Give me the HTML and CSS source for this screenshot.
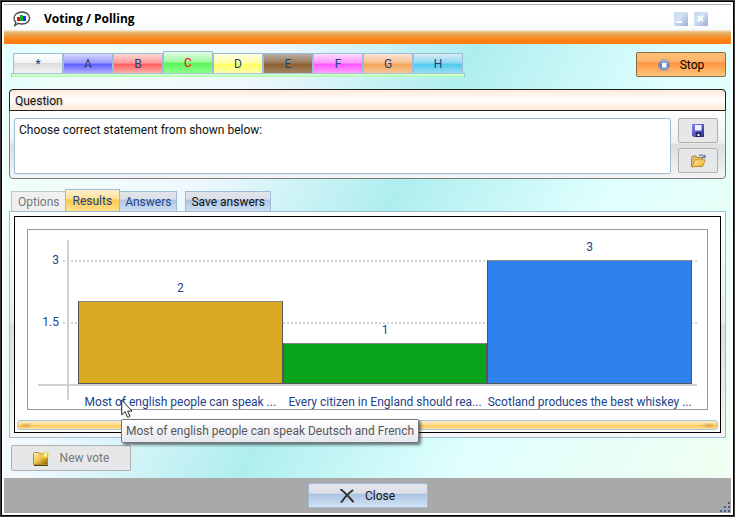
FILE: index.html
```html
<!DOCTYPE html>
<html lang="en">
<head>
<meta charset="utf-8">
<title>Voting / Polling</title>
<link rel="stylesheet" href="styles.css">
</head>
<body>
<div class="window">
  <header class="titlebar">
    <svg class="app-icon" width="18" height="16" viewBox="0 0 18 16">
      <path d="M3 11.500C1.500 10 1 8.500 1 7 1 3.500 4.500 1 9 1s7.500 2.700 7.500 6-3 6-7.500 6c-1.400 0-2.600-.3-3.600-.7L1.500 14.800z" fill="#fff" stroke="#444" stroke-width="1.300" stroke-linejoin="round"/>
      <path d="M4 6h3v4H4z" fill="#f01010"/><path d="M7 4h3v6H7z" fill="#10b030"/><path d="M10 5h3v5h-3z" fill="#1c30ee"/>
    </svg>
    <h1>Voting / Polling</h1>
    <button class="win-btn" aria-label="Minimize"><svg width="14" height="14" viewBox="0 0 14 14"><path d="M3 10h5" stroke="#fff" stroke-width="2"/></svg></button>
    <button class="win-btn" aria-label="Close window"><svg width="14" height="14" viewBox="0 0 14 14"><path d="M4 4l5 5M9 4l-5 5" stroke="#fff" stroke-width="2"/></svg></button>
  </header>
  <div class="stripe"></div>

  <main class="content">
    <div class="toolbar">
      <nav class="letters">
        <div class="letter-row">
          <button class="letter star">*</button>
          <button class="letter a">A</button>
          <button class="letter b">B</button>
          <button class="letter c selected">C</button>
          <button class="letter d">D</button>
          <button class="letter e">E</button>
          <button class="letter f">F</button>
          <button class="letter g">G</button>
          <button class="letter h">H</button>
        </div>
        <div class="letter-base"></div>
      </nav>
      <button class="stop">
        <svg width="12" height="12" viewBox="0 0 12 12">
          <defs><linearGradient id="orb" x2="0" y2="1"><stop stop-color="#b9c3df"/><stop offset=".5" stop-color="#6478ae"/><stop offset="1" stop-color="#90a5cd"/></linearGradient></defs>
          <circle cx="6" cy="6" r="5.500" fill="url(#orb)" stroke="#8190b8" stroke-width=".6"/><path d="M4 4h4.500v4.500H4z" fill="#fff"/>
        </svg>
        Stop
      </button>
    </div>

    <section class="question">
      <h2><label for="q">Question</label></h2>
      <div class="question-body">
        <textarea id="q">Choose correct statement from shown below:</textarea>
        <div class="side">
          <button class="plain" aria-label="Save">
            <svg width="12" height="13" viewBox="0 0 12 13">
              <defs><linearGradient id="disk" x2="1" y2="1"><stop stop-color="#8580f0"/><stop offset="1" stop-color="#2a2a98"/></linearGradient></defs>
              <path d="M0 0h12v13H1.500L0 11.500z" fill="url(#disk)"/><path d="M3 1h6.500v5.500H3z" fill="#eef4ff"/><path d="M4 8.500h5V13H4z" fill="#23234e"/><path d="M5.500 10h2v2h-2z" fill="#fff"/>
            </svg>
          </button>
          <button class="plain" aria-label="Open">
            <svg width="15" height="14" viewBox="0 0 15 14">
              <defs><linearGradient id="gold" x2="1" y2="1"><stop stop-color="#fff0a8"/><stop offset="1" stop-color="#f0a818"/></linearGradient></defs>
              <path d="M.5 12.500V3.500L1.500 2H5l1 1.500h5.500v2L11 12.500z" fill="#e2bc62" stroke="#a88a48"/><path d="M1 13L4 5.800h10.300L12 12z" fill="url(#gold)" stroke="#b88a30" stroke-width=".8"/>
              <path d="M8 2c1.500-1.500 3.500-1.500 4.500.2" fill="none" stroke="#6883a8" stroke-width="1.200"/><path d="M14.500 0v4h-4z" fill="#54749d"/>
            </svg>
          </button>
        </div>
      </div>
    </section>

    <div class="views">
      <button class="view" disabled>Options</button>
      <button class="view selected">Results</button>
      <button class="view blue">Answers</button>
      <button class="view blue save">Save answers</button>
    </div>
    <section class="panel">
      <div class="results">
        <div class="chart">
          <div class="plot">
            <div class="tick high"><span>3</span></div>
            <div class="tick mid"><span>1.5</span></div>
            <div class="axis"></div>
            <div class="bars">
              <div class="col"><span>2</span><div class="bar gold" style="height:57.400%"></div></div>
              <div class="col"><span>1</span><div class="bar green" style="height:28.700%"></div></div>
              <div class="col"><span>3</span><div class="bar azure" style="height:86.100%"></div></div>
            </div>
          </div>
          <div class="names">
            <div class="name">Most of english people can speak ...
              <svg class="cursor" width="12" height="20" viewBox="0 0 12 20"><path d="M.7 1v14.800l3.400-3.200 2.300 5.500q1.300.7 2.600-.8l-2.400-5.200h4.500z" fill="#fff" stroke="#222433"/></svg>
              <div class="tooltip" role="tooltip">Most of english people can speak Deutsch and French</div>
            </div>
            <div class="name">Every citizen in England should rea...</div>
            <div class="name">Scotland produces the best whiskey ...</div>
          </div>
        </div>
        <div class="scroll"></div>
      </div>
    </section>
    <button class="plain new-vote" disabled>
      <svg width="17" height="15" viewBox="0 0 17 15">
        <defs><linearGradient id="folder" x2="1" y2="1"><stop stop-color="#fff3bd"/><stop offset=".5" stop-color="#efc24a"/><stop offset="1" stop-color="#8c5e08"/></linearGradient></defs>
        <path d="M.5 13.500v-11L1.500 1.500h4L7 3h7.500v10.500z" fill="url(#folder)" stroke="#b68a2c"/><path d="M1 14.500h14" stroke="#55401a"/>
        <path d="M12.500 0v8M8.500 4h8M9.700 1.200l5.600 5.600M15.300 1.200L9.700 6.800" stroke="#ffd52c" stroke-width="1.200"/><circle cx="12.500" cy="4" r="1.500" fill="#fffbd0"/>
      </svg>
      New vote
    </button>
  </main>

  <footer class="footer">
    <button class="close">
      <svg width="14" height="14" viewBox="0 0 14 14"><path d="M1 .5C5 3.500 9 8 13 12.500M12.500 1.500C8 4.500 5 8 1.500 13" fill="none" stroke="#333" stroke-width="2" stroke-linecap="round"/></svg>
      Close
    </button>
    <svg class="grip" width="12" height="12" viewBox="0 0 12 12"><path d="M9 1h2v2H9zM5 5h2v2H5zM9 5h2v2H9zM1 9h2v2H1zM5 9h2v2H5zM9 9h2v2H9z" fill="#405f8e"/></svg>
  </footer>
</div>
</body>
</html>
```
FILE: styles.css
```css
* { box-sizing: border-box; }
body {
  margin: 0;
  font: 12px/16px Roboto, "Noto Sans", sans-serif;
  color: #111;
}
button, textarea { font: inherit; color: inherit; }
button { padding: 0; margin: 0; }
svg { display: block; flex: none; }
.window {
  min-height: 100vh;
  display: flex;
  flex-direction: column;
  border: 1px solid #3a3a3a;
  outline: 1px solid #000;
  outline-offset: -2px;
  padding: 3px;
  background: #fff;
}

/* Title bar */
.titlebar {
  display: flex;
  align-items: center;
  gap: 6px;
  height: 26px;
  padding: 2px 23px 0 9px;
  border-top: 1px solid #b9aca2;
  background: linear-gradient(#fff 60%, #f6f9fb);
}
.titlebar h1 {
  flex: 1;
  margin: 0 0 0 7px;
  font: bold 12px/16px "Open Sans", sans-serif;
  color: #000;
}
.win-btn {
  width: 14px;
  height: 14px;
  border: 0;
  border-radius: 1px;
  background: linear-gradient(135deg, #bcdaf0, #d3e3f3 40%, #9ba9d2);
}
.stripe {
  height: 14px;
  background: linear-gradient(#fdf3da 0, #e5b97c 15%, #eea04c 35%, #fb8418 65%, #ff7a0c);
}

/* Main area */
.content {
  flex: 1;
  display: flex;
  flex-direction: column;
  padding: 7px 5px;
  background: linear-gradient(119deg, #e0ffff, #f0fff8 9%, #f0f8ff 27%, #afeeee 49%, #e0ffff 71%, #f0fff0);
}
.toolbar {
  display: flex;
  justify-content: space-between;
  align-items: flex-start;
  height: 38px;
}
.letters { margin-left: 2px; }
.letter-row {
  display: flex;
  align-items: flex-end;
  height: 22px;
  padding: 0 2px;
}
.letter {
  width: 50px;
  height: 20px;
  border: 1px solid #9dbcd8;
  border-bottom: 0;
  color: #24427c;
}
.letter.selected { height: 22px; color: #f00; }
.star { background: linear-gradient(#fff, #f1f1f1 48%, #dcdcdc 50%, #f4f4f4); }
.a { background: linear-gradient(#d6d6ff, #9c9cff 45%, #6060ff 55%, #b0b0ff); }
.b { background: linear-gradient(#ffd6d6, #ff9c9c 45%, #ff6060 55%, #ffb0b0); }
.c { background: linear-gradient(#e4fbe4, #a4fba4 45%, #5cf55c 55%, #8dff8d); }
.d { background: linear-gradient(#ffffe4, #ffffa8 45%, #ffff60 55%, #ffffb0); }
.e { background: linear-gradient(#b8aea6, #9c7a5a 45%, #8f6030 55%, #a58467); }
.f { background: linear-gradient(#ffdcff, #ff98ff 45%, #ff58ff 55%, #ffa4ff); }
.g { background: linear-gradient(#fae6d6, #f8c090 45%, #f4a558 55%, #f8c898); }
.h { background: linear-gradient(#d8ecf6, #90daf2 45%, #50ccf0 55%, #9adcf4); }
.letter-base {
  height: 4px;
  border: 1px solid #a4c4d8;
  border-bottom: 0;
  background: linear-gradient(#e0ffe0, #a8ffa8);
}
.stop {
  display: flex;
  align-items: center;
  justify-content: center;
  gap: 10px;
  width: 90px;
  height: 25px;
  margin-top: 1px;
  border: 1px solid #8a6a40;
  border-radius: 2px;
  background: linear-gradient(#fbc078, #fcb468 38%, #ff9440 42%, #fdc67c);
  color: #000;
}

/* Question box */
.question {
  border: 1px solid #7c7c7c;
  border-radius: 4px;
  background: linear-gradient(#fff 24%, #efefef 60%, #dedede 62%, #f4f4f4);
}
.question h2 {
  margin: -1px;
  height: 22px;
  padding: 2px 5px;
  border: 1px solid #222;
  border-radius: 4px 4px 0 0;
  background: linear-gradient(#fdeadc, #fffdfb 50%, #fce8d8);
  font: inherit;
  line-height: 18px;
  text-shadow: 1px 1px 2px #bbb;
}
.question-body {
  display: flex;
  gap: 7px;
  padding: 8px 7px 4px 4px;
}
textarea {
  flex: 1;
  height: 56px;
  margin: 0;
  padding: 3px 4px;
  border: 1px solid #9dbcd8;
  border-radius: 2px;
  background: #fff;
  resize: none;
}
.side { display: flex; flex-direction: column; gap: 5px; }
.plain {
  display: flex;
  align-items: center;
  justify-content: center;
  width: 40px;
  height: 25px;
  border: 1px solid #b0b0b0;
  border-radius: 2px;
  background: #e6e7e9;
}

/* View tabs */
.views {
  display: flex;
  align-items: flex-end;
  height: 22px;
  margin-top: 10px;
  padding-left: 2px;
}
.view {
  height: 20px;
  padding: 0 5px;
  border: 1px solid #9dbcd8;
  border-bottom: 0;
  background: #f0f0f0;
  color: #1c4288;
}
.view:disabled { padding-left: 6px; color: #777; border-color: #bcc7cc; border-right: 0; }
.view.selected {
  height: 22px;
  padding: 0 7px;
  background: linear-gradient(#fdf0cb, #fde296 42%, #fbc94f 46%, #fee08c);
}
.view.blue { background: linear-gradient(#e2e4ea, #dcdfe8 38%, #acc4e2 42%, #cfdff2); border-left: 0; }
.view.save { margin-left: 8px; border-left: 1px solid #9dbcd8; color: #111; }

/* Results */
.panel {
  flex: 1;
  display: flex;
  padding: 4px;
  border: 1px solid #9dbcd8;
  background: linear-gradient(#fff, #ececec 49%, #dedede 50%, #f6f6f6);
}
.results {
  flex: 1;
  display: flex;
  flex-direction: column;
  padding: 12px 2px 2px;
  border: 1px solid #000;
  background: #fff;
}
.chart {
  flex: 1;
  display: flex;
  flex-direction: column;
  margin: 0 10px;
  padding: 10px 10px 0;
  border: 1px solid #999;
  color: #1c4288;
}
.plot {
  position: relative;
  flex: 1;
  display: flex;
  min-height: 120px;
  border-bottom: 2px solid #d0d0d0;
}
.tick {
  position: absolute;
  left: 25px;
  right: 0;
  height: 2px;
  background: repeating-linear-gradient(90deg, #d3d3d3 0 2px, transparent 2px 4px);
}
.tick.high { bottom: 85%; }
.tick.mid { bottom: 42%; }
.tick span { position: absolute; right: 100%; top: -8px; padding-right: 4px; }
.axis {
  position: absolute;
  left: 29px;
  top: 0;
  bottom: -16px;
  width: 2px;
  background: #d0d0d0;
}
.bars {
  position: relative;
  flex: 1;
  display: flex;
  margin: 0 5px 0 40px;
}
.col {
  flex: 1;
  display: flex;
  flex-direction: column;
  justify-content: flex-end;
  text-align: center;
}
.col span { padding-bottom: 5px; }
.bar { border: 1px solid #555; border-top-color: #888; flex: none; }
.gold { background: #d9aa22; }
.green { background: #08a41c; }
.azure { background: #2f81ed; }
.names { display: flex; height: 23px; padding: 8px 5px 0 40px; }
.name {
  position: relative;
  flex: 1 0 0;
  width: 0;
  display: flex;
  justify-content: center;
  white-space: nowrap;
}
.cursor { position: absolute; left: 43px; top: 5px; }
.tooltip {
  position: absolute;
  z-index: 1;
  left: 43px;
  top: 25px;
  padding: 3px 4px;
  border: 1px solid #767676;
  border-radius: 2px;
  background: linear-gradient(#fff, #e6e7f0);
  box-shadow: 2px 2px 3px #0008;
  color: #575757;
}
.scroll {
  height: 10px;
  margin-top: 10px;
  border: 1px solid #a9c4de;
  border-radius: 3px;
  background:
    radial-gradient(ellipse 8px 3px at 8px 55%, #c0902c99, transparent),
    radial-gradient(ellipse 8px 3px at calc(100% - 8px) 55%, #c0902c99, transparent),
    linear-gradient(#feecc8, #fddc94 45%, #fbcb5c 55%, #fedf98);
}
.new-vote {
  gap: 10px;
  width: 120px;
  height: 26px;
  margin: 7px 0 0 2px;
  color: #777;
}

/* Footer */
.footer {
  position: relative;
  display: flex;
  justify-content: center;
  padding: 5px 0;
  background: #a9a9a9;
}
.close {
  display: flex;
  align-items: center;
  justify-content: center;
  gap: 11px;
  width: 120px;
  height: 25px;
  border: 1px solid #9dbcdc;
  border-radius: 2px;
  background: linear-gradient(#e4e6eb, #dce0e8 40%, #aac4e2 44%, #d4e3f4);
  color: #111;
}
.grip { position: absolute; right: 0; bottom: 0; }
```
